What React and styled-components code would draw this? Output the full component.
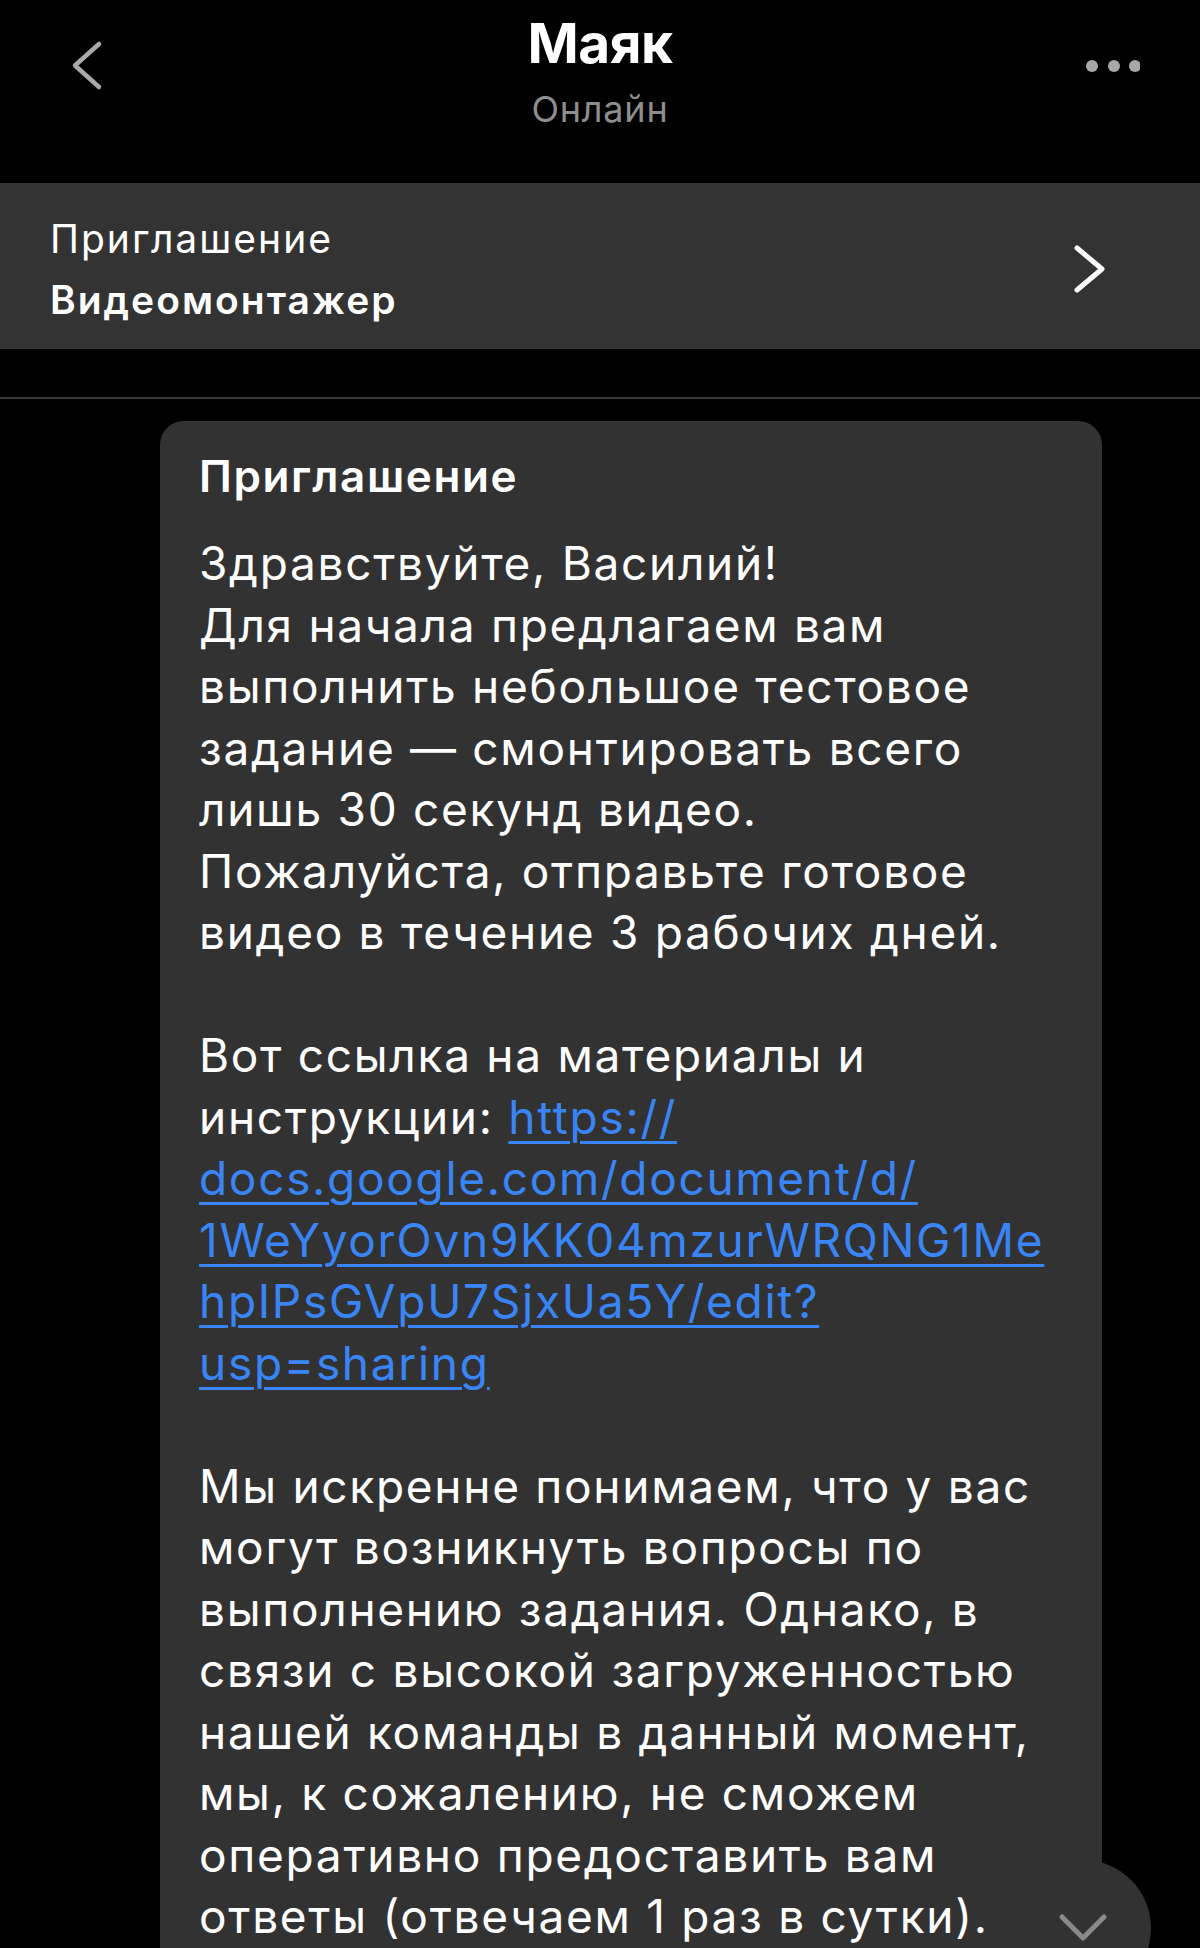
import React from "react";
import styled, { createGlobalStyle } from "styled-components";

const GlobalStyle = createGlobalStyle`
  html, body {
    margin: 0;
    padding: 0;
    background: #000;
  }
  body {
    font-family: Inter, "Noto Sans", "Liberation Sans", sans-serif;
    color: #fff;
    -webkit-font-smoothing: antialiased;
  }
  * { box-sizing: border-box; }
`;

const Screen = styled.div`
  position: relative;
  width: 1200px;
  height: 1948px;
  overflow: hidden;
  background: #000;
`;

const NavBar = styled.header`
  display: grid;
  grid-template-columns: 1fr auto 1fr;
  height: 183px;
`;

const NavSide = styled.div`
  display: flex;
  justify-content: ${(p) => (p.$end ? "flex-end" : "flex-start")};
  align-items: flex-start;
  padding: ${(p) => (p.$end ? "56px 60px 0 0" : "36px 0 0 63px")};
`;

const NavCenter = styled.div`
  display: flex;
  flex-direction: column;
  align-items: center;
  padding-top: 10px;
`;

const NavTitle = styled.h1`
  margin: 0;
  font-size: 55px;
  line-height: 66px;
  font-weight: 700;
  letter-spacing: -0.5px;
  color: #fff;
`;

const NavStatus = styled.div`
  margin-top: 12px;
  font-size: 36px;
  line-height: 43px;
  font-weight: 400;
  letter-spacing: 0.8px;
  color: #8e8e8e;
`;

const IconButton = styled.button`
  display: block;
  padding: 0;
  border: 0;
  background: none;
  line-height: 0;
  cursor: pointer;
`;

const Banner = styled.div`
  display: flex;
  align-items: center;
  justify-content: space-between;
  background: #333333;
  padding: 25px 90px 19px 50px;
`;

const BannerText = styled.div`
  display: flex;
  flex-direction: column;
  font-size: 39px;
  line-height: 61px;
  letter-spacing: 2px;
`;

const BannerLabel = styled.span`
  font-weight: ${(p) => (p.$strong ? 600 : 400)};
  color: #fff;
`;

const Divider = styled.hr`
  margin: 48px 0 0;
  border: 0;
  height: 2px;
  background: #3a3a3a;
`;

const Feed = styled.main`
  padding: 22px 0 0 160px;
`;

const Bubble = styled.article`
  width: 942px;
  background: #323232;
  border-radius: 24px;
  padding: 29px 28px 60px 39px;
`;

const BubbleTitle = styled.h2`
  margin: 0;
  font-size: 44px;
  line-height: 53px;
  font-weight: 600;
  letter-spacing: 1.6px;
  color: #fff;
`;

const Paragraph = styled.p`
  margin: ${(p) => (p.$first ? "30px" : "61.5px")} 0 0;
  font-size: 46px;
  line-height: 61.5px;
  font-weight: 400;
  letter-spacing: 1.7px;
  color: #fff;
`;

const Link = styled.a`
  color: #3a85f5;
  text-decoration: underline;
  text-decoration-thickness: 3px;
  text-underline-offset: 7px;
`;

const ScrollDown = styled.button`
  position: absolute;
  left: 1015px;
  top: 1860px;
  width: 136px;
  height: 136px;
  border: 0;
  border-radius: 50%;
  background: #323232;
  display: flex;
  align-items: center;
  justify-content: center;
  padding: 0;
  cursor: pointer;
`;

const BackIcon = () => (
  <svg width="48" height="60" viewBox="0 0 48 60" fill="none">
    <path d="M36 8 L12 29.5 L36 51" stroke="#a9a9a9" strokeWidth="4.5" strokeLinecap="round" strokeLinejoin="round" />
  </svg>
);

const MoreIcon = () => (
  <svg width="60" height="20" viewBox="0 0 60 20">
    <circle cx="12" cy="10" r="6" fill="#a8a8a8" />
    <circle cx="34" cy="10" r="6" fill="#a8a8a8" />
    <circle cx="55" cy="10" r="6" fill="#a8a8a8" />
  </svg>
);

const ForwardIcon = () => (
  <svg width="40" height="56" viewBox="0 0 40 56" fill="none">
    <path d="M7 7 L32 28 L7 49" stroke="#fff" strokeWidth="5" strokeLinecap="round" strokeLinejoin="round" />
  </svg>
);

const DownIcon = () => (
  <svg width="50" height="30" viewBox="0 0 50 30" fill="none">
    <path d="M4 4 L25 25 L46 4" stroke="#8a8a8a" strokeWidth="5" strokeLinecap="round" strokeLinejoin="round" />
  </svg>
);

export default function App() {
  return (
    <>
      <GlobalStyle />
      <Screen>
        <NavBar>
          <NavSide>
            <IconButton aria-label="Назад"><BackIcon /></IconButton>
          </NavSide>
          <NavCenter>
            <NavTitle>Маяк</NavTitle>
            <NavStatus>Онлайн</NavStatus>
          </NavCenter>
          <NavSide $end>
            <IconButton aria-label="Ещё"><MoreIcon /></IconButton>
          </NavSide>
        </NavBar>

        <Banner>
          <BannerText>
            <BannerLabel>Приглашение</BannerLabel>
            <BannerLabel $strong>Видеомонтажер</BannerLabel>
          </BannerText>
          <IconButton aria-label="Открыть"><ForwardIcon /></IconButton>
        </Banner>

        <Divider />

        <Feed>
          <Bubble>
            <BubbleTitle>Приглашение</BubbleTitle>
            <Paragraph $first>
              Здравствуйте, Василий!<br />
              Для начала предлагаем вам<br />
              выполнить небольшое тестовое<br />
              задание — смонтировать всего<br />
              лишь 30 секунд видео.<br />
              Пожалуйста, отправьте готовое<br />
              видео в течение 3 рабочих дней.
            </Paragraph>
            <Paragraph>
              Вот ссылка на материалы и<br />
              инструкции:{" "}
              <Link href="#">
                https://<br />
                docs.google.com/document/d/<br />
                1WeYyorOvn9KK04mzurWRQNG1Me<br />
                hpIPsGVpU7SjxUa5Y/edit?<br />
                usp=sharing
              </Link>
            </Paragraph>
            <Paragraph>
              Мы искренне понимаем, что у вас<br />
              могут возникнуть вопросы по<br />
              выполнению задания. Однако, в<br />
              связи с высокой загруженностью<br />
              нашей команды в данный момент,<br />
              мы, к сожалению, не сможем<br />
              оперативно предоставить вам<br />
              ответы (отвечаем 1 раз в сутки).
            </Paragraph>
          </Bubble>
        </Feed>

        <ScrollDown aria-label="Вниз"><DownIcon /></ScrollDown>
      </Screen>
    </>
  );
}
